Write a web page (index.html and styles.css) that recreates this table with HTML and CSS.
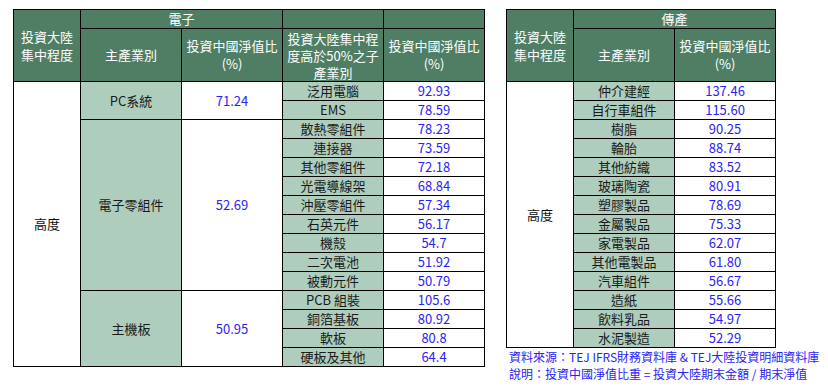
FILE: index.html
```html
<!DOCTYPE html>
<html lang="zh-Hant">
<head>
<meta charset="utf-8">
<link rel="stylesheet" href="styles.css">
</head>
<body>
<div class="page">
  <table class="grid grid-left">
    <colgroup><col class="c67"><col class="c101"><col class="c101"><col class="c101"><col class="c101"></colgroup>
    <thead>
      <tr class="h1">
        <th rowspan="2">投資大陸<br>集中程度</th>
        <th colspan="2">電子</th>
        <th></th>
        <th></th>
      </tr>
      <tr class="h2">
        <th>主產業別</th>
        <th>投資中國淨值比<br>(%)</th>
        <th class="wrap">投資大陸集中程度高於50%之子產業別</th>
        <th>投資中國淨值比<br>(%)</th>
      </tr>
    </thead>
    <tbody>
      <tr><td rowspan="15" class="lvl">高度</td><td rowspan="2" class="ind">PC系統</td><td rowspan="2" class="num">71.24</td><td class="ind">泛用電腦</td><td class="num">92.93</td></tr>
      <tr><td class="ind">EMS</td><td class="num">78.59</td></tr>
      <tr><td rowspan="9" class="ind">電子零組件</td><td rowspan="9" class="num">52.69</td><td class="ind">散熱零組件</td><td class="num">78.23</td></tr>
      <tr><td class="ind">連接器</td><td class="num">73.59</td></tr>
      <tr><td class="ind">其他零組件</td><td class="num">72.18</td></tr>
      <tr><td class="ind">光電導線架</td><td class="num">68.84</td></tr>
      <tr><td class="ind">沖壓零組件</td><td class="num">57.34</td></tr>
      <tr><td class="ind">石英元件</td><td class="num">56.17</td></tr>
      <tr><td class="ind">機殼</td><td class="num">54.7</td></tr>
      <tr><td class="ind">二次電池</td><td class="num">51.92</td></tr>
      <tr><td class="ind">被動元件</td><td class="num">50.79</td></tr>
      <tr><td rowspan="4" class="ind">主機板</td><td rowspan="4" class="num">50.95</td><td class="ind">PCB 組裝</td><td class="num">105.6</td></tr>
      <tr><td class="ind">銅箔基板</td><td class="num">80.92</td></tr>
      <tr><td class="ind">軟板</td><td class="num">80.8</td></tr>
      <tr><td class="ind">硬板及其他</td><td class="num">64.4</td></tr>
    </tbody>
  </table>

  <div class="side">
    <table class="grid grid-right">
      <colgroup><col class="c67"><col class="c101"><col class="c101"></colgroup>
      <thead>
        <tr class="h1">
          <th rowspan="2">投資大陸<br>集中程度</th>
          <th colspan="2">傳產</th>
        </tr>
        <tr class="h2">
          <th>主產業別</th>
          <th>投資中國淨值比<br>(%)</th>
        </tr>
      </thead>
      <tbody>
        <tr><td rowspan="14" class="lvl">高度</td><td class="ind">仲介建經</td><td class="num">137.46</td></tr>
        <tr><td class="ind">自行車組件</td><td class="num">115.60</td></tr>
        <tr><td class="ind">樹脂</td><td class="num">90.25</td></tr>
        <tr><td class="ind">輪胎</td><td class="num">88.74</td></tr>
        <tr><td class="ind">其他紡織</td><td class="num">83.52</td></tr>
        <tr><td class="ind">玻璃陶瓷</td><td class="num">80.91</td></tr>
        <tr><td class="ind">塑膠製品</td><td class="num">78.69</td></tr>
        <tr><td class="ind">金屬製品</td><td class="num">75.33</td></tr>
        <tr><td class="ind">家電製品</td><td class="num">62.07</td></tr>
        <tr><td class="ind">其他電製品</td><td class="num">61.80</td></tr>
        <tr><td class="ind">汽車組件</td><td class="num">56.67</td></tr>
        <tr><td class="ind">造紙</td><td class="num">55.66</td></tr>
        <tr><td class="ind">飲料乳品</td><td class="num">54.97</td></tr>
        <tr><td class="ind">水泥製造</td><td class="num">52.29</td></tr>
      </tbody>
    </table>
    <div class="notes">
      <p>資料來源：TEJ IFRS財務資料庫 &amp; TEJ大陸投資明細資料庫</p>
      <p>說明：投資中國淨值比重 = 投資大陸期末金額 / 期末淨值</p>
    </div>
  </div>
</div>
</body>
</html>
```

FILE: styles.css
```css
html, body {
  margin: 0;
  padding: 0;
  background: #ffffff;
}

body {
  font-family: "Noto Sans CJK TC", "Noto Sans", sans-serif;
  font-size: 13px;
  color: #1a1a1a;
}

.page {
  display: flex;
  align-items: flex-start;
  gap: 21px;
  padding: 9px 0 0 13px;
}

.grid {
  border-collapse: collapse;
  table-layout: fixed;
}

.grid-left { width: 471px; }
.grid-right { width: 269px; }

.c67 { width: 67px; }
.c101 { width: 101px; }

.grid th,
.grid td {
  border: 1px solid #000;
  padding: 0;
  text-align: center;
  vertical-align: middle;
}

.grid th {
  background: #4f7e65;
  color: #ffffff;
  font-weight: normal;
  line-height: 18px;
}

.grid .h1 th { height: 18px; }
.grid .h2 th { height: 52px; }

.grid th.wrap {
  padding: 0 4px;
  line-height: 17px;
}

.grid td {
  height: 18px;
  line-height: 18px;
}

.lvl {
  background: #ffffff;
  color: #111;
}

.ind {
  background: #aecdbd;
  color: #1a1a1a;
}

.num {
  background: #ffffff;
  color: #2b22f5;
}

.notes {
  padding: 0 0 0 3px;
  color: #2b22f5;
  font-size: 12px;
  line-height: 17px;
}

.notes p {
  margin: 0;
  white-space: nowrap;
}
```
